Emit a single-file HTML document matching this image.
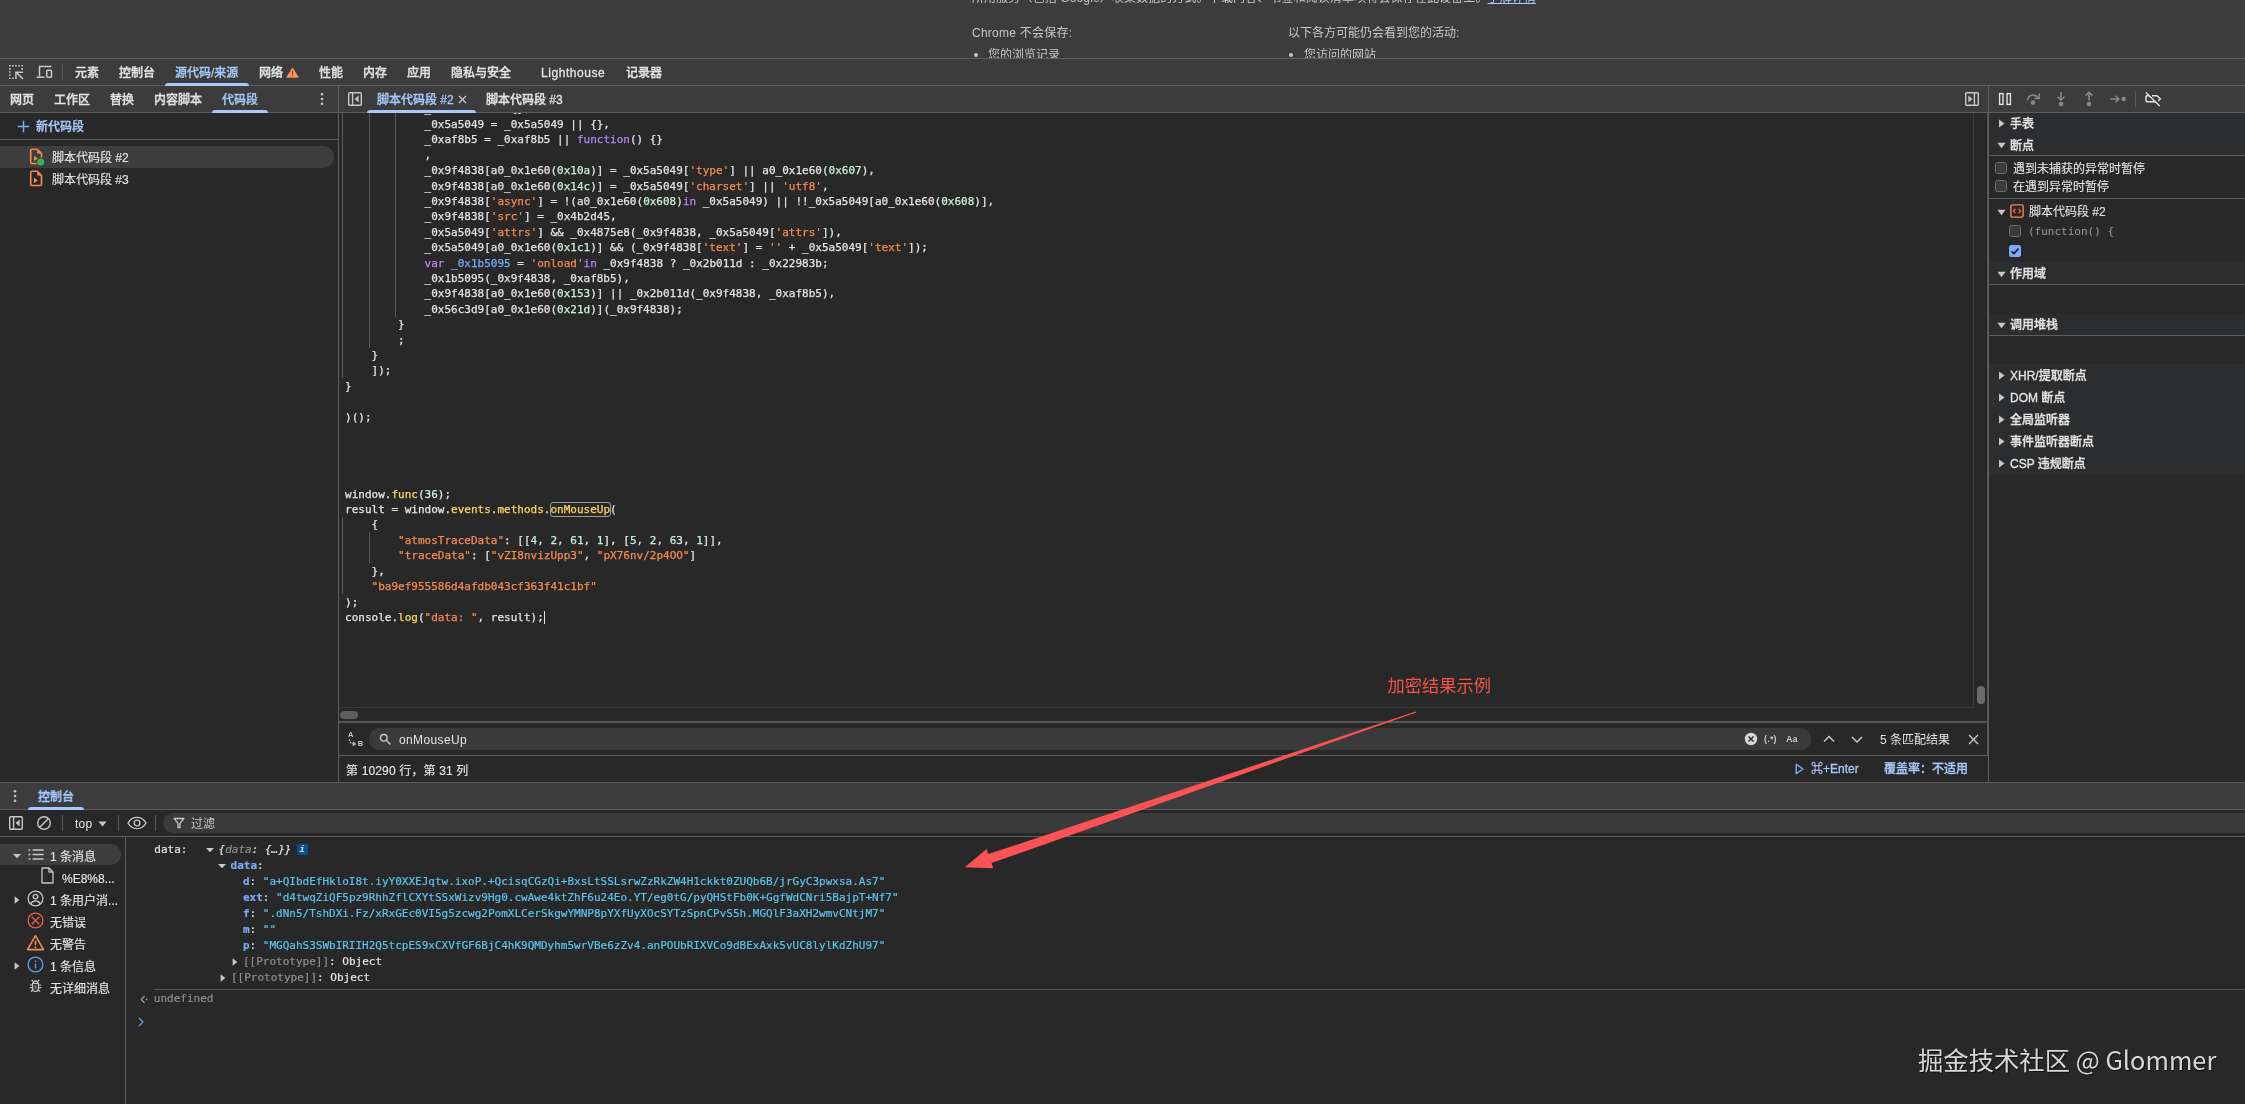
<!DOCTYPE html>
<html lang="zh-CN">
<head>
<meta charset="utf-8">
<title>DevTools</title>
<style>
html,body{margin:0;padding:0;width:2245px;height:1104px;overflow:hidden;background:#282828;}
body{position:relative;font-family:"Liberation Sans","Noto Sans CJK SC",sans-serif;font-size:12px;line-height:16px;color:#e3e3e3;-webkit-font-smoothing:antialiased;}
#root{position:absolute;left:0;top:0;width:2245px;height:1104px;overflow:hidden;will-change:transform;}
.a{position:absolute;white-space:nowrap;}
.bar{background:#3c3c3c;}
.hl{position:absolute;height:1px;background:#5e5e5e;}
.vl{position:absolute;width:1px;background:#5e5e5e;}
.t{position:absolute;white-space:nowrap;height:16px;line-height:16px;font-weight:500;color:#e3e3e3;-webkit-text-stroke:0.3px;}
.blue{color:#a8c7fa;}
.ul{position:absolute;height:3px;background:#a8c7fa;border-radius:3px 3px 0 0;}
.mono{font-family:"Liberation Mono","Noto Sans CJK SC",monospace;font-size:11px;}
svg{position:absolute;overflow:visible;}
/* code */
#code{position:absolute;left:6.1px;top:-11px;-webkit-text-stroke:0.25px;font-family:"DejaVu Sans Mono","Liberation Mono",monospace;font-size:11px;line-height:15px;color:#e3e3e3;}
#code div{position:absolute;left:0;height:15px;white-space:pre;}
.s{color:#f28b54;}
.k{color:#b587ee;}
.n{color:#c8efd6;}
.d{color:#78a9f6;}
.p{color:#fbd65f;}
.g{position:absolute;width:1px;background:#595959;}
/* console */
#con{position:absolute;left:-0.6px;top:0;-webkit-text-stroke:0.2px;font-family:"DejaVu Sans Mono","Liberation Mono",monospace;font-size:11px;line-height:16px;white-space:pre;color:#e3e3e3;}
#con div{position:absolute;height:16px;}
.ck{color:#7da8f1;font-weight:bold;}
.cs{color:#5cc4ec;}
.cg{color:#8f8f8f;}
.sb{position:absolute;white-space:nowrap;height:16px;line-height:16px;color:#e3e3e3;-webkit-text-stroke:0.15px;}
.rp{position:absolute;white-space:nowrap;height:16px;line-height:16px;color:#e3e3e3;font-weight:500;-webkit-text-stroke:0.3px;}
</style>
</head>
<body>
<div id="root">
<!-- ===== top page strip ===== -->
<div class="a bar" style="left:0;top:0;width:2245px;height:58px;"></div>
<div class="a" style="left:972px;top:-9.700px;height:16px;line-height:16px;font-size:12px;color:#c7c7c7;letter-spacing:0.120px;">所用服务（包括 Google）收集数据的方式。下载内容、书签和阅读清单项将会保存在此设备上。<span style="color:#a8c7fa;text-decoration:underline;">了解详情</span></div>
<div class="a" style="left:972px;top:25.300px;height:16px;line-height:16px;font-size:12px;color:#c7c7c7;letter-spacing:0.250px;">Chrome 不会保存:</div>
<div class="a" style="left:1288px;top:25.300px;height:16px;line-height:16px;font-size:12px;color:#c7c7c7;">以下各方可能仍会看到您的活动:</div>
<div class="a" style="left:972px;top:47px;height:11px;overflow:hidden;width:200px;"><div class="a" style="left:1.600px;top:5.500px;width:4.600px;height:4.600px;border-radius:50%;background:#c7c7c7;"></div><div class="a" style="left:16px;top:0.300px;height:16px;line-height:16px;font-size:12px;color:#c7c7c7;">您的浏览记录</div></div>
<div class="a" style="left:1288px;top:47px;height:11px;overflow:hidden;width:200px;"><div class="a" style="left:0.600px;top:5.500px;width:4.600px;height:4.600px;border-radius:50%;background:#c7c7c7;"></div><div class="a" style="left:16px;top:0.300px;height:16px;line-height:16px;font-size:12px;color:#c7c7c7;">您访问的网站</div></div>
<!-- ===== main tab bar ===== -->
<div class="a bar" style="left:0;top:58px;width:2245px;height:55px;"></div>
<div class="hl" style="left:0;top:58px;width:2245px;"></div>
<div class="hl" style="left:0;top:85px;width:2245px;"></div>
<div class="hl" style="left:0;top:112px;width:2245px;"></div>
<!-- main tabs -->
<svg style="left:8px;top:64px;" width="16" height="16" viewBox="0 0 16 16" fill="none" stroke="#c7c7c7" stroke-width="1.500"><path d="M1 1.750h14" stroke-dasharray="1.600 1.500"/><path d="M1.750 4.100v11" stroke-dasharray="1.600 1.500"/><path d="M14.250 4.100v2.400" stroke-dasharray="1.600 1.500"/><path d="M4.100 14.250h2.400" stroke-dasharray="1.600 1.500"/><path d="M15 8.200H7.900V15M8.200 8.400L15 15" stroke-width="1.500"/></svg>
<svg style="left:36px;top:64px;" width="17" height="16" viewBox="0 0 17 16" fill="none" stroke="#c7c7c7" stroke-width="1.5"><path d="M3.5 12.5v-10h12"/><path d="M0.5 13.2h8"/><rect x="10.7" y="6.2" width="4.8" height="7" rx="1"/></svg>
<div class="vl" style="left:62px;top:64px;height:16px;background:#5a5a5a;"></div>
<div class="t" style="left:75px;top:65px;">元素</div>
<div class="t" style="left:119px;top:65px;">控制台</div>
<div class="t blue" style="left:175px;top:65px;">源代码/来源</div>
<div class="ul" style="left:165px;top:83px;width:84px;"></div>
<div class="t" style="left:259px;top:65px;">网络</div>
<svg style="left:285.700px;top:67.400px;" width="13" height="11" viewBox="0 0 13 11"><path d="M6.500 0.900L12.300 10.300H0.700z" fill="#f6935f" stroke="#f6935f" stroke-width="0.800" stroke-linejoin="round"/><path d="M6.500 3.800v3.400M6.500 8.100v1.100" stroke="#8a3a12" stroke-width="1.100"/></svg>
<div class="t" style="left:319px;top:65px;">性能</div>
<div class="t" style="left:363px;top:65px;">内存</div>
<div class="t" style="left:407px;top:65px;">应用</div>
<div class="t" style="left:451px;top:65px;">隐私与安全</div>
<div class="t" style="left:541px;top:65px;letter-spacing:0.550px;">Lighthouse</div>
<div class="t" style="left:626px;top:65px;">记录器</div>
<!-- secondary bar: navigator tabs -->
<div class="t" style="left:10px;top:92px;">网页</div>
<div class="t" style="left:54px;top:92px;">工作区</div>
<div class="t" style="left:110px;top:92px;">替换</div>
<div class="t" style="left:154px;top:92px;">内容脚本</div>
<div class="t blue" style="left:222px;top:92px;">代码段</div>
<div class="ul" style="left:212px;top:110px;width:56px;"></div>
<svg style="left:320px;top:92px;" width="4" height="14" viewBox="0 0 4 14" fill="#c7c7c7"><circle cx="2" cy="2.2" r="1.3"/><circle cx="2" cy="7" r="1.3"/><circle cx="2" cy="11.8" r="1.3"/></svg>
<div class="vl" style="left:338px;top:86px;height:696px;"></div>
<!-- editor tabs -->
<svg style="left:347px;top:91px;" width="16" height="16" viewBox="0 0 16 16" fill="none" stroke="#c7c7c7" stroke-width="1.4"><rect x="1.7" y="1.7" width="12.6" height="12.6" rx="1"/><path d="M5.6 1.7v12.6"/><path d="M11.6 4.5L7.6 8l4 3.5z" fill="#c7c7c7" stroke="none"/></svg>
<div class="t blue" style="left:377px;top:92px;">脚本代码段 #2</div>
<svg style="left:458px;top:95px;" width="9" height="9" viewBox="0 0 9 9" stroke="#c7c7c7" stroke-width="1.3"><path d="M1 1l7 7M8 1l-7 7"/></svg>
<div class="ul" style="left:367px;top:110px;width:109px;"></div>
<div class="t" style="left:486px;top:92px;">脚本代码段 #3</div>
<svg style="left:1964px;top:91px;" width="16" height="16" viewBox="0 0 16 16" fill="none" stroke="#c7c7c7" stroke-width="1.4"><rect x="1.7" y="1.7" width="12.6" height="12.6" rx="1"/><path d="M10.4 1.7v12.6"/><path d="M4.4 4.5L8.4 8l-4 3.5z" fill="#c7c7c7" stroke="none"/></svg>
<div class="vl" style="left:1988px;top:86px;height:696px;"></div>
<div class="vl" style="left:1987px;top:113px;height:642px;background:#555;"></div>
<!-- debugger sidebar -->
<svg style="left:1997px;top:91px;" width="16" height="16" viewBox="0 0 16 16" fill="none" stroke="#e3e3e3" stroke-width="1.4"><rect x="2.6" y="2.6" width="3.4" height="10.8"/><rect x="10" y="2.6" width="3.4" height="10.8"/></svg>
<svg style="left:2025px;top:91px;" width="17" height="16" viewBox="0 0 17 16" fill="none" stroke="#8a8a8a" stroke-width="1.5"><path d="M2.6 9.2a5.4 5.4 0 0 1 10.2-2.2"/><path d="M14.2 2.6v4.8h-4.8"/><circle cx="8" cy="11.6" r="2.3" fill="#8a8a8a" stroke="none"/></svg>
<svg style="left:2053px;top:91px;" width="16" height="16" viewBox="0 0 16 16" fill="none" stroke="#8a8a8a" stroke-width="1.5"><path d="M8 1v8M4.6 5.8L8 9.2l3.4-3.4"/><circle cx="8" cy="13" r="2.3" fill="#8a8a8a" stroke="none"/></svg>
<svg style="left:2081px;top:91px;" width="16" height="16" viewBox="0 0 16 16" fill="none" stroke="#8a8a8a" stroke-width="1.5"><path d="M8 9.4v-8M4.6 4.6L8 1.2l3.4 3.4"/><circle cx="8" cy="13" r="2.3" fill="#8a8a8a" stroke="none"/></svg>
<svg style="left:2109px;top:91px;" width="18" height="16" viewBox="0 0 18 16" fill="none" stroke="#8a8a8a" stroke-width="1.5"><path d="M1 8h8.6M6.6 4.8L9.8 8l-3.2 3.2"/><circle cx="14.6" cy="8" r="2.3" fill="#8a8a8a" stroke="none"/></svg>
<div class="vl" style="left:2135px;top:91px;height:16px;background:#5a5a5a;"></div>
<svg style="left:2144px;top:90px;" width="20" height="18" viewBox="0 0 20 18" fill="none" stroke="#e3e3e3" stroke-width="1.400"><path d="M5 5.800H3a1 1 0 0 0-1 1v4a1 1 0 0 0 1 1h8.200"/><path d="M8 5.800h4.800l3.600 3-2.300 2.200"/><path d="M1.800 2.400l14 13.700"/></svg>
<div class="a" style="left:1989px;top:113px;width:256px;height:43px;background:#2c2d2f;"></div>
<svg style="left:1998px;top:119px;" width="8" height="9" viewBox="0 0 8 9"><path d="M1 0.6l5.6 3.9L1 8.4z" fill="#c7c7c7"/></svg>
<div class="rp" style="left:2010px;top:116px;">手表</div>
<svg style="left:1996.500px;top:142px;" width="9" height="7" viewBox="0 0 9 7"><path d="M0.4 0.8h8.2L4.5 6.2z" fill="#c7c7c7"/></svg>
<div class="rp" style="left:2010px;top:138px;">断点</div>
<div class="hl" style="left:1989px;top:155px;width:256px;"></div>
<div class="a" style="left:1995px;top:161.700px;width:12px;height:12px;box-sizing:border-box;border:1px solid #6e6e6e;border-radius:2.500px;background:#3b3b3b;"></div>
<div class="rp" style="left:2013px;top:161px;font-weight:400;-webkit-text-stroke:0.12px;">遇到未捕获的异常时暂停</div>
<div class="a" style="left:1995px;top:179.800px;width:12px;height:12px;box-sizing:border-box;border:1px solid #6e6e6e;border-radius:2.500px;background:#3b3b3b;"></div>
<div class="rp" style="left:2013px;top:179px;font-weight:400;-webkit-text-stroke:0.12px;">在遇到异常时暂停</div>
<div class="hl" style="left:1989px;top:198px;width:256px;"></div>
<!-- debugger sidebar 2 -->
<svg style="left:1996.5px;top:209px;" width="9" height="7" viewBox="0 0 9 7"><path d="M0.4 0.8h8.2L4.5 6.2z" fill="#c7c7c7"/></svg>
<svg style="left:2010px;top:204px;" width="14" height="14" viewBox="0 0 14 14" fill="none"><rect x="0.9" y="0.9" width="12.2" height="12.2" rx="1.6" stroke="#f28b54" stroke-width="1.4"/><path d="M5.4 5L3.4 7l2 2M8.600 5l2 2-2 2" stroke="#ee5e4e" stroke-width="1.4"/></svg>
<div class="rp" style="left:2029px;top:204px;font-weight:400;-webkit-text-stroke:0.12px;">脚本代码段 #2</div>
<div class="a" style="left:2009px;top:225px;width:12px;height:12px;box-sizing:border-box;border:1px solid #6e6e6e;border-radius:2.500px;background:#3b3b3b;"></div>
<div class="a" style="left:2028px;top:224px;height:16px;line-height:16px;font-family:'DejaVu Sans Mono','Liberation Mono',monospace;font-size:11px;color:#9a9a9a;">(function() {</div>
<div class="a" style="left:2009px;top:245px;width:12px;height:12px;border-radius:2.500px;background:#7cacf8;"></div>
<svg style="left:2009px;top:245px;" width="12" height="12" viewBox="0 0 12 12" fill="none" stroke="#1f1f1f" stroke-width="1.7"><path d="M2.6 6.3l2.300 2.300 4.600-5"/></svg>
<div class="a" style="left:1989px;top:262px;width:256px;height:22px;background:#2c2d2f;"></div>
<svg style="left:1996.5px;top:271px;" width="9" height="7" viewBox="0 0 9 7"><path d="M0.4 0.8h8.2L4.5 6.2z" fill="#c7c7c7"/></svg>
<div class="rp" style="left:2010px;top:266px;">作用域</div>
<div class="hl" style="left:1989px;top:284px;width:256px;"></div>
<div class="a" style="left:1989px;top:314px;width:256px;height:21px;background:#2c2d2f;"></div>
<svg style="left:1996.5px;top:322px;" width="9" height="7" viewBox="0 0 9 7"><path d="M0.4 0.8h8.2L4.5 6.2z" fill="#c7c7c7"/></svg>
<div class="rp" style="left:2010px;top:317px;">调用堆栈</div>
<div class="hl" style="left:1989px;top:335px;width:256px;"></div>
<div class="a" style="left:1989px;top:364px;width:256px;height:111px;background:#2c2d2f;"></div>
<svg style="left:1998px;top:370.5px;" width="8" height="9" viewBox="0 0 8 9"><path d="M1 0.6l5.6 3.9L1 8.4z" fill="#c7c7c7"/></svg>
<div class="rp" style="left:2010px;top:368px;">XHR/提取断点</div>
<svg style="left:1998px;top:392.5px;" width="8" height="9" viewBox="0 0 8 9"><path d="M1 0.6l5.6 3.9L1 8.4z" fill="#c7c7c7"/></svg>
<div class="rp" style="left:2010px;top:390px;">DOM 断点</div>
<svg style="left:1998px;top:414.5px;" width="8" height="9" viewBox="0 0 8 9"><path d="M1 0.6l5.6 3.9L1 8.4z" fill="#c7c7c7"/></svg>
<div class="rp" style="left:2010px;top:412px;">全局监听器</div>
<svg style="left:1998px;top:436.5px;" width="8" height="9" viewBox="0 0 8 9"><path d="M1 0.6l5.6 3.9L1 8.4z" fill="#c7c7c7"/></svg>
<div class="rp" style="left:2010px;top:434px;">事件监听器断点</div>
<svg style="left:1998px;top:458.5px;" width="8" height="9" viewBox="0 0 8 9"><path d="M1 0.6l5.6 3.9L1 8.4z" fill="#c7c7c7"/></svg>
<div class="rp" style="left:2010px;top:456px;">CSP 违规断点</div>
<!-- left navigator -->
<svg style="left:17px;top:120px;" width="13" height="13" viewBox="0 0 13 13" stroke="#7cacf8" stroke-width="1.5"><path d="M6.5 0.8v11.4M0.8 6.5h11.4"/></svg>
<div class="t blue" style="left:36px;top:119px;">新代码段</div>
<div class="hl" style="left:0;top:139px;width:338px;"></div>
<div class="a" style="left:0;top:146.300px;width:334px;height:21.700px;background:#3e3e3e;border-radius:0 11px 11px 0;"></div>
<svg style="left:29px;top:148.400px;" width="16" height="18" viewBox="0 0 16 18" fill="none"><path d="M1.700 2.500a1.200 1.200 0 0 1 1.200-1.200h5.300l4.300 4.300v8.700a1.200 1.200 0 0 1-1.200 1.200H2.900a1.200 1.200 0 0 1-1.200-1.200z" stroke="#f28b54" stroke-width="1.600" stroke-linejoin="round"/><path d="M8.200 1.300v4.300h4.300z" fill="#f28b54"/><path d="M5 7.800l3.900 2.600-3.900 2.600z" fill="#f28b54"/><circle cx="11.700" cy="13.900" r="4.300" fill="#3e3e3e"/><circle cx="11.700" cy="13.900" r="3.500" fill="#36b556"/></svg>
<div class="sb" style="left:52px;top:150px;">脚本代码段 #2</div>
<svg style="left:29px;top:170.400px;" width="16" height="18" viewBox="0 0 16 18" fill="none"><path d="M1.700 2.500a1.200 1.200 0 0 1 1.200-1.200h5.300l4.300 4.300v8.700a1.200 1.200 0 0 1-1.200 1.200H2.900a1.200 1.200 0 0 1-1.200-1.200z" stroke="#f28b54" stroke-width="1.600" stroke-linejoin="round"/><path d="M8.200 1.300v4.300h4.300z" fill="#f28b54"/><path d="M5 7.800l3.900 2.600-3.900 2.600z" fill="#f28b54"/></svg>
<div class="sb" style="left:52px;top:172px;">脚本代码段 #3</div>
<!-- code editor -->
<div class="a" style="left:339px;top:113px;width:1649px;height:608px;overflow:hidden;">
<div class="g" style="left:3.4px;top:-12.0px;height:277.3px;"></div>
<div class="g" style="left:29.9px;top:-12.0px;height:246.5px;"></div>
<div class="g" style="left:56.4px;top:-12.0px;height:215.7px;"></div>
<div class="g" style="left:3.4px;top:403.9px;height:77.0px;"></div>
<div class="g" style="left:29.9px;top:419.3px;height:30.8px;"></div>
<div class="a" style="left:210.6px;top:389.4px;width:61.4px;height:14.4px;border:1px solid #9a9a9a;border-radius:3px;box-sizing:border-box;"></div>
<div class="a" style="left:204.8px;top:498.0px;width:1px;height:12.5px;background:#e3e3e3;"></div>
<div id="code">
<div style="top:-1px;">            _0x4b2d45 =  {},</div>
<div style="top:15px;">            _0x5a5049 = _0x5a5049 || {},</div>
<div style="top:30px;">            _0xaf8b5 = _0xaf8b5 || <span class="k">function</span>() {}</div>
<div style="top:46px;">            ,</div>
<div style="top:61px;">            _0x9f4838[a0_0x1e60(<span class="n">0x10a</span>)] = _0x5a5049[<span class="s">'type'</span>] || a0_0x1e60(<span class="n">0x607</span>),</div>
<div style="top:77px;">            _0x9f4838[a0_0x1e60(<span class="n">0x14c</span>)] = _0x5a5049[<span class="s">'charset'</span>] || <span class="s">'utf8'</span>,</div>
<div style="top:92px;">            _0x9f4838[<span class="s">'async'</span>] = !(a0_0x1e60(<span class="n">0x608</span>)<span class="k">in</span> _0x5a5049) || !!_0x5a5049[a0_0x1e60(<span class="n">0x608</span>)],</div>
<div style="top:107px;">            _0x9f4838[<span class="s">'src'</span>] = _0x4b2d45,</div>
<div style="top:123px;">            _0x5a5049[<span class="s">'attrs'</span>] &amp;&amp; _0x4875e8(_0x9f4838, _0x5a5049[<span class="s">'attrs'</span>]),</div>
<div style="top:138px;">            _0x5a5049[a0_0x1e60(<span class="n">0x1c1</span>)] &amp;&amp; (_0x9f4838[<span class="s">'text'</span>] = <span class="s">''</span> + _0x5a5049[<span class="s">'text'</span>]);</div>
<div style="top:154px;">            <span class="k">var</span> <span class="d">_0x1b5095</span> = <span class="s">'onload'</span><span class="k">in</span> _0x9f4838 ? _0x2b011d : _0x22983b;</div>
<div style="top:169px;">            _0x1b5095(_0x9f4838, _0xaf8b5),</div>
<div style="top:184px;">            _0x9f4838[a0_0x1e60(<span class="n">0x153</span>)] || _0x2b011d(_0x9f4838, _0xaf8b5),</div>
<div style="top:200px;">            _0x56c3d9[a0_0x1e60(<span class="n">0x21d</span>)](_0x9f4838);</div>
<div style="top:215px;">        }</div>
<div style="top:231px;">        ;</div>
<div style="top:246px;">    }</div>
<div style="top:261px;">    ]);</div>
<div style="top:277px;">}</div>
<div style="top:308px;">)();</div>
<div style="top:385px;">window.<span class="p">func</span>(<span class="n">36</span>);</div>
<div style="top:400px;">result = window.<span class="p">events</span>.<span class="p">methods</span>.<span class="p" id="hit">onMouseUp</span>(</div>
<div style="top:415px;">    {</div>
<div style="top:431px;">        <span class="s">"atmosTraceData"</span>: [[<span class="n">4</span>, <span class="n">2</span>, <span class="n">61</span>, <span class="n">1</span>], [<span class="n">5</span>, <span class="n">2</span>, <span class="n">63</span>, <span class="n">1</span>]],</div>
<div style="top:446px;">        <span class="s">"traceData"</span>: [<span class="s">"vZI8nvizUpp3"</span>, <span class="s">"pX76nv/2p4OO"</span>]</div>
<div style="top:462px;">    },</div>
<div style="top:477px;">    <span class="s">"ba9ef955586d4afdb043cf363f41c1bf"</span></div>
<div style="top:493px;">);</div>
<div style="top:508px;">console.<span class="p">log</span>(<span class="s">"data: "</span>, result);</div>
</div>
</div>
</div>
<!-- editor scrollbars -->
<div class="vl" style="left:1973px;top:113px;height:595px;background:#3a3a3a;"></div>
<div class="hl" style="left:339px;top:707px;width:1635px;background:#3a3a3a;"></div>
<div class="a" style="left:1977px;top:686px;width:8px;height:18px;border-radius:4px;background:#6b6b6b;"></div>
<div class="a" style="left:340px;top:711px;width:18px;height:8px;border-radius:4px;background:#5e5e5e;"></div>
<!-- search bar -->
<div class="hl" style="left:339px;top:721px;width:1649px;height:2px;background:#555;"></div>
<div class="a" style="left:369px;top:728px;width:1442px;height:22px;border-radius:11px;background:#3a3a3a;"></div>
<svg style="left:346px;top:730px;" width="18" height="18" viewBox="0 0 18 18" fill="none" stroke="#c7c7c7" stroke-width="1.300"><path d="M3.400 9.200c0.200 3 1.800 4.600 5 4.800" stroke-dasharray="1.700 1.100"/><path d="M7 12l2.300 2.100-2.600 1.500" stroke-width="1.200"/></svg>
<div class="a" style="left:348px;top:730px;font-size:7.500px;line-height:9px;font-weight:bold;color:#c7c7c7;">A</div>
<div class="a" style="left:357.700px;top:739.300px;font-size:7.500px;line-height:9px;font-weight:bold;color:#c7c7c7;">B</div>
<svg style="left:379px;top:733px;" width="13" height="13" viewBox="0 0 13 13" fill="none" stroke="#c7c7c7" stroke-width="1.400"><circle cx="4.800" cy="4.800" r="3.300"/><path d="M7.300 7.300l4.200 4.200"/></svg>
<div class="a" style="left:399px;top:732px;height:16px;line-height:16px;color:#e3e3e3;letter-spacing:0.380px;">onMouseUp</div>
<svg style="left:1744px;top:732px;" width="14" height="14" viewBox="0 0 14 14"><circle cx="7" cy="7" r="6.200" fill="#d6d6d6"/><path d="M4.500 4.500l5 5M9.500 4.500l-5 5" stroke="#2e2e2e" stroke-width="1.500"/></svg>
<div class="a" style="left:1764px;top:733px;font-size:9px;line-height:12px;font-weight:bold;color:#c7c7c7;letter-spacing:0.200px;">(.*)</div>
<div class="a" style="left:1786px;top:733px;font-size:9px;line-height:12px;font-weight:bold;color:#c7c7c7;">Aa</div>
<svg style="left:1823px;top:735px;" width="12" height="8" viewBox="0 0 12 8" fill="none" stroke="#c7c7c7" stroke-width="1.500"><path d="M1 6.500l5-5 5 5"/></svg>
<svg style="left:1851px;top:736px;" width="12" height="8" viewBox="0 0 12 8" fill="none" stroke="#c7c7c7" stroke-width="1.500"><path d="M1 1l5 5 5-5"/></svg>
<div class="a" style="left:1880px;top:732px;height:16px;line-height:16px;color:#e3e3e3;">5 条匹配结果</div>
<svg style="left:1968px;top:734px;" width="11" height="11" viewBox="0 0 11 11" stroke="#c7c7c7" stroke-width="1.400"><path d="M1 1l9 9M10 1l-9 9"/></svg>
<div class="hl" style="left:339px;top:755px;width:1649px;"></div>
<!-- status bar -->
<div class="a" style="left:346px;top:763px;height:16px;line-height:16px;color:#e3e3e3;letter-spacing:0.150px;-webkit-text-stroke:0.150px;">第 10290 行，第 31 列</div>
<svg style="left:1795px;top:763px;" width="9" height="12" viewBox="0 0 9 12" fill="none" stroke="#7cacf8" stroke-width="1.400" stroke-linejoin="round"><path d="M1.200 1.300v9.400L8 6z"/></svg>
<div class="t blue" style="left:1811px;top:761px;">⌘+Enter</div>
<div class="t blue" style="left:1884px;top:761px;">覆盖率：不适用</div>
<!-- console drawer -->
<div class="a bar" style="left:0;top:782px;width:2245px;height:28px;"></div>
<div class="hl" style="left:0;top:782px;width:2245px;"></div>
<div class="hl" style="left:0;top:809px;width:2245px;"></div>
<div class="hl" style="left:0;top:836px;width:2245px;"></div>
<svg style="left:13px;top:789px;" width="4" height="14" viewBox="0 0 4 14" fill="#c7c7c7"><circle cx="2" cy="2.200" r="1.300"/><circle cx="2" cy="7" r="1.300"/><circle cx="2" cy="11.800" r="1.300"/></svg>
<div class="t blue" style="left:38px;top:789px;">控制台</div>
<div class="ul" style="left:28px;top:807px;width:56px;"></div>
<svg style="left:8px;top:815px;" width="16" height="16" viewBox="0 0 16 16" fill="none" stroke="#c7c7c7" stroke-width="1.400"><rect x="1.700" y="1.700" width="12.600" height="12.600" rx="1"/><path d="M5.600 1.700v12.600"/><path d="M11.6 4.5L7.6 8l4 3.5z" fill="#c7c7c7" stroke="none"/></svg>
<svg style="left:36px;top:815px;" width="16" height="16" viewBox="0 0 16 16" fill="none" stroke="#c7c7c7" stroke-width="1.400"><circle cx="8" cy="8" r="6.300"/><path d="M3.600 12.400l8.800-8.800"/></svg>
<div class="vl" style="left:62px;top:815px;height:16px;background:#5a5a5a;"></div>
<div class="a" style="left:75px;top:816.200px;height:16px;line-height:16px;color:#e3e3e3;letter-spacing:0.200px;">top</div>
<svg style="left:98px;top:821px;" width="9" height="6" viewBox="0 0 9 6"><path d="M0.500 0.500h8L4.500 5.500z" fill="#c7c7c7"/></svg>
<div class="vl" style="left:118px;top:815px;height:16px;background:#5a5a5a;"></div>
<svg style="left:127px;top:816px;" width="20" height="14" viewBox="0 0 20 14" fill="none" stroke="#c7c7c7" stroke-width="1.400"><path d="M1 7c2-3.600 5.200-5.600 9-5.600s7 2 9 5.600c-2 3.600-5.200 5.600-9 5.600S3 10.600 1 7z"/><circle cx="10" cy="7" r="2.900"/></svg>
<div class="vl" style="left:155px;top:815px;height:16px;background:#5a5a5a;"></div>
<div class="a" style="left:163px;top:813px;width:2100px;height:20px;border-radius:10px;background:#3a3a3a;"></div>
<svg style="left:173px;top:817px;" width="12" height="12" viewBox="0 0 12 12" fill="none" stroke="#c7c7c7" stroke-width="1.300" stroke-linejoin="round"><path d="M1.200 1.500h9.600L7 6.300v4.200H5V6.300z"/></svg>
<div class="a" style="left:191px;top:816.400px;height:16px;line-height:16px;color:#c7c7c7;">过滤</div>
<div class="vl" style="left:125px;top:837px;height:267px;"></div>
<!-- console sidebar -->
<div class="a" style="left:0;top:843.600px;width:121px;height:21.400px;background:#3e3e3e;border-radius:0 11px 11px 0;"></div>
<svg style="left:13px;top:853px;" width="8" height="6" viewBox="0 0 8 6"><path d="M0 1h8L4 5.200z" fill="#c7c7c7"/></svg>
<svg style="left:28px;top:848px;" width="16" height="13" viewBox="0 0 16 13" fill="none" stroke="#c7c7c7" stroke-width="1.400"><path d="M4.600 2h11M4.600 6.500h11M4.600 11h11"/><path d="M0.400 2h2M0.400 6.500h2M0.400 11h2"/></svg>
<div class="sb" style="left:50px;top:849.3px;">1 条消息</div>
<svg style="left:41px;top:867px;" width="13" height="17" viewBox="0 0 13 17" fill="none" stroke="#c7c7c7" stroke-width="1.300" stroke-linejoin="round"><path d="M1 1h7l4 4v11H1z"/><path d="M8 1v4h4"/></svg>
<div class="sb" style="left:62px;top:871.3px;">%E8%8...</div>
<svg style="left:14px;top:896px;" width="6" height="8" viewBox="0 0 6 8"><path d="M0.600 0.300l4.800 3.700L0.600 7.700z" fill="#c7c7c7"/></svg>
<svg style="left:27px;top:890px;" width="17" height="17" viewBox="0 0 17 17" fill="none" stroke="#c7c7c7" stroke-width="1.300"><circle cx="8.500" cy="8.500" r="7.400"/><circle cx="8.500" cy="6.600" r="2.300"/><path d="M3.600 13.800c1.200-2 2.900-3 4.900-3s3.700 1 4.900 3"/></svg>
<div class="sb" style="left:50px;top:893.3px;">1 条用户消...</div>
<svg style="left:27px;top:912px;" width="17" height="17" viewBox="0 0 17 17" fill="none" stroke="#ee5e4e" stroke-width="1.300"><circle cx="8.500" cy="8.500" r="7.400"/><path d="M4.800 4.800l7.400 7.400M12.200 4.800l-7.400 7.400"/></svg>
<div class="sb" style="left:50px;top:915.3px;">无错误</div>
<svg style="left:26px;top:934px;" width="19" height="17" viewBox="0 0 19 17" fill="none" stroke="#f28b54" stroke-width="1.600" stroke-linejoin="round"><path d="M9.500 1.600l8 14H1.500z"/><path d="M9.500 6.400v4.800M9.500 12.600v1.600"/></svg>
<div class="sb" style="left:50px;top:937.3px;">无警告</div>
<svg style="left:14px;top:962px;" width="6" height="8" viewBox="0 0 6 8"><path d="M0.600 0.300l4.800 3.700L0.600 7.700z" fill="#c7c7c7"/></svg>
<svg style="left:27px;top:956px;" width="17" height="17" viewBox="0 0 17 17" fill="none" stroke="#5c9ded" stroke-width="1.300"><circle cx="8.500" cy="8.500" r="7.400"/><path d="M8.500 7.400v5.200M8.500 4.400v1.600"/></svg>
<div class="sb" style="left:50px;top:959.3px;">1 条信息</div>
<svg style="left:28px;top:977.800px;" width="15" height="16" viewBox="0 0 15 16" fill="none" stroke="#c7c7c7" stroke-width="1.200"><path d="M4.600 5.400h5.800v5.200a2.900 2.900 0 0 1-5.800 0z"/><path d="M5.200 5.200a2.300 2.300 0 0 1 4.600 0"/><path d="M4.600 7H1.800M4.600 9.600H1.800M13.200 7h-2.800M13.200 9.600h-2.800M4.800 12l-2 1.600M10.200 12l2 1.600M5 3.400L3.600 1.800M10 3.400l1.400-1.600M6.600 8h1.800M6.600 10h1.800"/></svg>
<div class="sb" style="left:50px;top:981.3px;">无详细消息</div>
<!-- console messages -->
<div id="con">
<div style="left:154.9px;top:841.5px;">data:</div>
<div style="left:219.2px;top:841.5px;"><i>{<span class="cg">data</span>: {…}}</i></div>
<div style="left:231.2px;top:857.5px;"><span class="ck">data</span>:</div>
<div style="left:243.5px;top:873.5px;"><span class="ck">d</span>: <span class="cs">"a+QIbdEfHkloI8t.iyY0XXEJqtw.ixoP.+QcisqCGzQi+BxsLtSSLsrwZzRkZW4H1ckkt0ZUQb6B/jrGyC3pwxsa.As7"</span></div>
<div style="left:243.5px;top:889.5px;"><span class="ck">ext</span>: <span class="cs">"d4twqZiQF5pz9RhhZflCXYtSSxWizv9Hg0.cwAwe4ktZhF6u24Eo.YT/eg0tG/pyQHStFb0K+GgfWdCNri5BajpT+Nf7"</span></div>
<div style="left:243.5px;top:905.5px;"><span class="ck">f</span>: <span class="cs">".dNn5/TshDXi.Fz/xRxGEc0VI5g5zcwg2PomXLCerSkgwYMNP8pYXfUyXOcSYTzSpnCPvS5h.MGQlF3aXH2wmvCNtjM7"</span></div>
<div style="left:243.5px;top:921.5px;"><span class="ck">m</span>: <span class="cs">""</span></div>
<div style="left:243.5px;top:937.5px;"><span class="ck">p</span>: <span class="cs">"MGQahS3SWbIRIIH2Q5tcpES9xCXVfGF6BjC4hK9QMDyhm5wrVBe6zZv4.anPOUbRIXVCo9dBExAxk5vUC8lylKdZhU97"</span></div>
<div style="left:243.6px;top:953.5px;"><span class="cg">[[Prototype]]</span>: Object</div>
<div style="left:231.6px;top:969.5px;"><span class="cg">[[Prototype]]</span>: Object</div>
<div style="left:154.4px;top:991.0px;"><span class="cg">undefined</span></div>
</div>
<svg style="left:206px;top:846.5px;" width="8" height="6" viewBox="0 0 8 6"><path d="M0 1h8L4 5.200z" fill="#c7c7c7"/></svg>
<svg style="left:218px;top:862.5px;" width="8" height="6" viewBox="0 0 8 6"><path d="M0 1h8L4 5.200z" fill="#c7c7c7"/></svg>
<svg style="left:232px;top:957.5px;" width="6" height="8" viewBox="0 0 6 8"><path d="M0.600 0.300l4.800 3.700L0.600 7.700z" fill="#c7c7c7"/></svg>
<svg style="left:220px;top:973.5px;" width="6" height="8" viewBox="0 0 6 8"><path d="M0.600 0.300l4.800 3.700L0.600 7.700z" fill="#c7c7c7"/></svg>
<div class="a" style="left:296.500px;top:843.500px;width:11px;height:11px;border-radius:2px;background:#0a508f;"></div><div class="a" style="left:296.500px;top:843.500px;width:11px;height:11px;line-height:11px;text-align:center;font-family:'Liberation Mono',monospace;font-style:italic;font-weight:bold;font-size:9.500px;color:#d3e3fd;">i</div>
<div class="hl" style="left:154px;top:989px;width:2091px;background:#565656;"></div>
<svg style="left:140px;top:995px;" width="9" height="9" viewBox="0 0 9 9" fill="none" stroke="#9a9a9a" stroke-width="1.200"><path d="M4.600 1L1.200 4.500l3.400 3.500"/><circle cx="6.600" cy="4.500" r="0.900" fill="#9a9a9a" stroke="none"/></svg>
<svg style="left:138px;top:1017px;" width="6" height="10" viewBox="0 0 6 10" fill="none" stroke="#5c9ded" stroke-width="1.300"><path d="M1 1l4 4-4 4"/></svg>
<!-- annotation -->
<div class="a" style="left:1387.500px;top:674.400px;height:24px;line-height:24px;font-size:17.250px;color:#f4524f;font-family:'Liberation Sans','Noto Sans CJK SC',sans-serif;">加密结果示例</div>
<svg style="left:0;top:0;" width="2245" height="1104" viewBox="0 0 2245 1104"><polygon points="1415.6,711.6 988.4,854.1 986.6,848.9 964.9,867.2 993.3,868.2 991.5,863.1 1416.0,712.6" fill="#fb5256"/></svg>
<div class="a" style="left:1918px;top:1039.700px;height:38px;line-height:38px;font-size:25.350px;color:#d6d6d6;font-family:'Noto Sans CJK SC','Liberation Sans',sans-serif;text-shadow:1px 1px 1px rgba(0,0,0,0.6);">掘金技术社区 @ Glommer</div>
</div>
</body>
</html>
